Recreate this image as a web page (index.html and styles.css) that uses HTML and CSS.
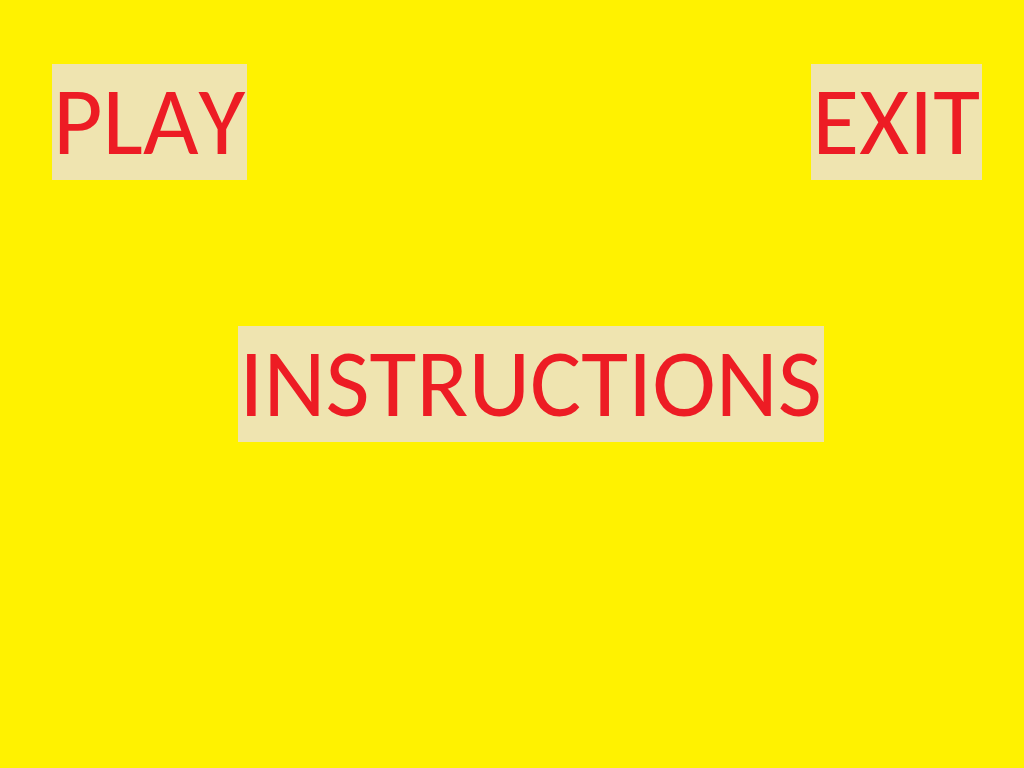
FILE: index.html
```html
<!DOCTYPE html>
<html lang="en">
<head>
<meta charset="utf-8">
<title>Main menu</title>
<link rel="stylesheet" href="styles.css">
</head>
<body>
<main class="menu">
  <div class="menu-top">
    <button type="button" class="menu-button">PLAY</button>
    <button type="button" class="menu-button">EXIT</button>
  </div>
  <div class="menu-center">
    <button type="button" class="menu-button">INSTRUCTIONS</button>
  </div>
</main>
</body>
</html>
```

FILE: styles.css
```css
body {
  margin: 0;
  background: #fff200;
}

.menu {
  min-height: 100vh;
  box-sizing: border-box;
  padding: 64px 42px 64px 52px;
}

.menu-top {
  display: flex;
  justify-content: space-between;
}

.menu-center {
  display: flex;
  justify-content: center;
  margin-top: 146px;
  padding-left: 28px;
}

.menu-button {
  border: 0;
  padding: 0 2px 0 1px;
  background: #efe4b0;
  color: #ed1c24;
  font-family: Calibri, Carlito, Lato, sans-serif;
  font-size: 96px;
  font-kerning: none;
  line-height: 116px;
  cursor: pointer;
}
```
